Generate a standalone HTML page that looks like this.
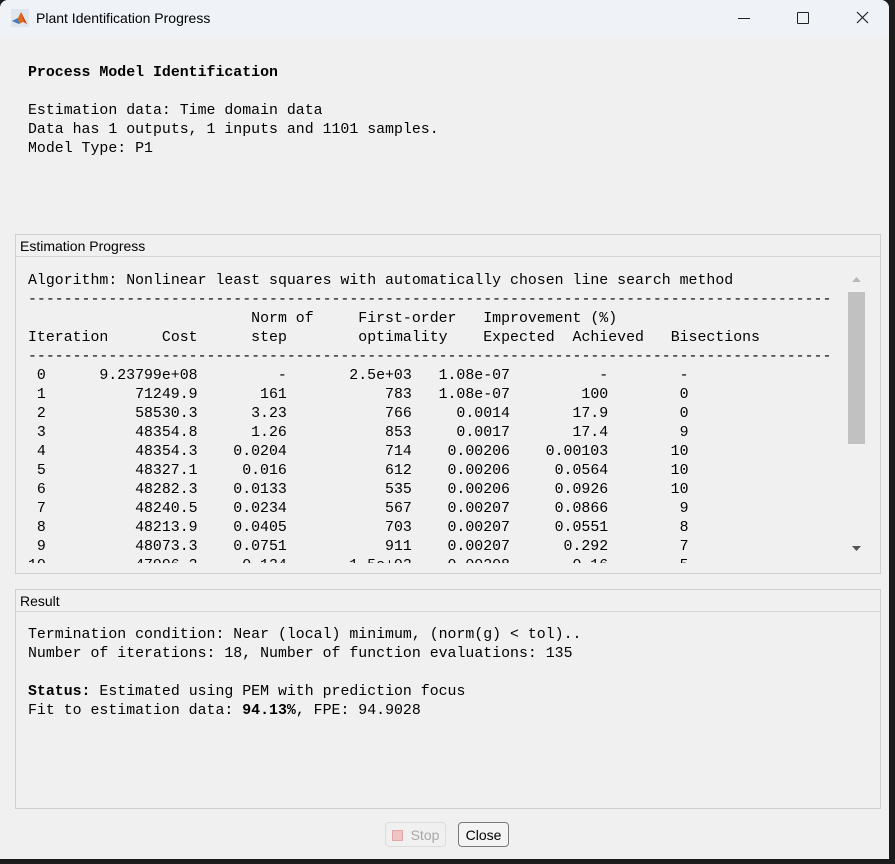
<!DOCTYPE html>
<html><head><meta charset="utf-8"><style>
html,body{margin:0;padding:0;width:895px;height:864px;background:#1c1c1c;overflow:hidden}
#win{position:absolute;left:0;top:0;width:889px;height:859px;background:#f0f0f0;border-radius:8px 8px 0 0;overflow:hidden}
#tb{position:absolute;left:0;top:0;width:889px;height:37px;background:#eff3f8}
#tb .t{position:absolute;left:36px;top:10px;font:14px "Liberation Sans",sans-serif;color:#000}
.mono{font-family:"Liberation Mono",monospace;font-size:14.88px;line-height:19px;color:#000;white-space:pre}
.abs{position:absolute}
.panel{position:absolute;left:15px;width:864px;border:1px solid #cfcfcf;background:#f0f0f0}
.ph{height:21px;border-bottom:1px solid #d4d4d4;font:14px "Liberation Sans",sans-serif;padding-left:4px;line-height:22px}
.rows{white-space:normal}
.row{display:flex;height:19px;white-space:pre}
.row span{display:block;text-align:right}
.btn{position:absolute;top:822px;height:25px;border-radius:4px;font:14px "Liberation Sans",sans-serif;line-height:25px;text-align:center;box-sizing:border-box}
</style></head><body>
<div id="win">
<div id="tb">
<svg class="abs" style="left:11px;top:9px" width="18" height="18" viewBox="0 0 18 18"><rect x="0" y="0" width="18" height="18" fill="#dfe6ee"/><path d="M1 12 L7 9 L10 3 L16 15 L12 13 L8 15 Z" fill="#e06a1c"/><path d="M1 12 L7 9 L8 15 Z" fill="#3b7fc4"/><path d="M10 3 L16 15 L13 13 Z" fill="#c8461a"/></svg>
<div class="t">Plant Identification Progress</div>
<div class="abs" style="left:738px;top:18px;width:12px;height:1px;background:#222"></div>
<div class="abs" style="left:797px;top:12px;width:10px;height:10px;border:1px solid #222;border-radius:1px"></div>
<svg class="abs" style="left:856px;top:11px" width="13" height="13"><path d="M1 1L12 12M12 1L1 12" stroke="#222" stroke-width="1.2"/></svg>
</div>
<div class="abs mono" style="left:28px;top:64px"><b>Process Model Identification</b>

Estimation data: Time domain data
Data has 1 outputs, 1 inputs and 1101 samples.
Model Type: P1</div>

<div class="panel" style="top:234px;height:338px">
<div class="ph">Estimation Progress</div>
<div class="abs" style="left:0;top:28px;width:830px;height:300px;overflow:hidden">
<div class="abs mono" style="left:12px;top:9px">Algorithm: Nonlinear least squares with automatically chosen line search method
------------------------------------------------------------------------------------------
                         Norm of     First-order   Improvement (%)
Iteration      Cost      step        optimality    Expected  Achieved   Bisections
------------------------------------------------------------------------------------------</div>
<div class="abs mono rows" style="left:12px;top:104px"><div class="row"><span style="width:2ch">0</span><span style="width:17ch">9.23799e+08</span><span style="width:10ch">-</span><span style="width:14ch">2.5e+03</span><span style="width:11ch">1.08e-07</span><span style="width:11ch">-</span><span style="width:9ch">-</span></div><div class="row"><span style="width:2ch">1</span><span style="width:17ch">71249.9</span><span style="width:10ch">161</span><span style="width:14ch">783</span><span style="width:11ch">1.08e-07</span><span style="width:11ch">100</span><span style="width:9ch">0</span></div><div class="row"><span style="width:2ch">2</span><span style="width:17ch">58530.3</span><span style="width:10ch">3.23</span><span style="width:14ch">766</span><span style="width:11ch">0.0014</span><span style="width:11ch">17.9</span><span style="width:9ch">0</span></div><div class="row"><span style="width:2ch">3</span><span style="width:17ch">48354.8</span><span style="width:10ch">1.26</span><span style="width:14ch">853</span><span style="width:11ch">0.0017</span><span style="width:11ch">17.4</span><span style="width:9ch">9</span></div><div class="row"><span style="width:2ch">4</span><span style="width:17ch">48354.3</span><span style="width:10ch">0.0204</span><span style="width:14ch">714</span><span style="width:11ch">0.00206</span><span style="width:11ch">0.00103</span><span style="width:9ch">10</span></div><div class="row"><span style="width:2ch">5</span><span style="width:17ch">48327.1</span><span style="width:10ch">0.016</span><span style="width:14ch">612</span><span style="width:11ch">0.00206</span><span style="width:11ch">0.0564</span><span style="width:9ch">10</span></div><div class="row"><span style="width:2ch">6</span><span style="width:17ch">48282.3</span><span style="width:10ch">0.0133</span><span style="width:14ch">535</span><span style="width:11ch">0.00206</span><span style="width:11ch">0.0926</span><span style="width:9ch">10</span></div><div class="row"><span style="width:2ch">7</span><span style="width:17ch">48240.5</span><span style="width:10ch">0.0234</span><span style="width:14ch">567</span><span style="width:11ch">0.00207</span><span style="width:11ch">0.0866</span><span style="width:9ch">9</span></div><div class="row"><span style="width:2ch">8</span><span style="width:17ch">48213.9</span><span style="width:10ch">0.0405</span><span style="width:14ch">703</span><span style="width:11ch">0.00207</span><span style="width:11ch">0.0551</span><span style="width:9ch">8</span></div><div class="row"><span style="width:2ch">9</span><span style="width:17ch">48073.3</span><span style="width:10ch">0.0751</span><span style="width:14ch">911</span><span style="width:11ch">0.00207</span><span style="width:11ch">0.292</span><span style="width:9ch">7</span></div><div class="row"><span style="width:2ch">10</span><span style="width:17ch">47996.3</span><span style="width:10ch">0.134</span><span style="width:14ch">1.5e+03</span><span style="width:11ch">0.00208</span><span style="width:11ch">0.16</span><span style="width:9ch">5</span></div></div>
</div>
<div class="abs" style="left:831px;top:37px;width:18px;height:293px;background:#f0f0f0">
<svg class="abs" style="left:5px;top:5px" width="9" height="6"><path d="M0 5L4.5 0L9 5Z" fill="#b8b8b8"/></svg>
<div class="abs" style="left:1px;top:20px;width:17px;height:152px;background:#c1c1c1"></div>
<svg class="abs" style="left:5px;top:274px" width="9" height="6"><path d="M0 0L9 0L4.5 5Z" fill="#555"/></svg>
</div>
</div>

<div class="panel" style="top:589px;height:218px">
<div class="ph">Result</div>
<div class="abs mono" style="left:12px;top:36px">Termination condition: Near (local) minimum, (norm(g) &lt; tol)..
Number of iterations: 18, Number of function evaluations: 135

<b>Status:</b> Estimated using PEM with prediction focus
Fit to estimation data: <b>94.13%</b>, FPE: 94.9028</div>
</div>

<div class="btn" style="left:385px;width:61px;border:1px solid #dcdcdc;color:#a8a8a8"><span style="display:inline-block;width:9px;height:9px;background:#f0c4c4;border:1px solid #e2a8a8;margin-right:8px;vertical-align:-1px"></span>Stop</div>
<div class="btn" style="left:458px;width:51px;border:1px solid #7a7a7a;background:#f4f4f4;color:#000">Close</div>
</div>
</body></html>
